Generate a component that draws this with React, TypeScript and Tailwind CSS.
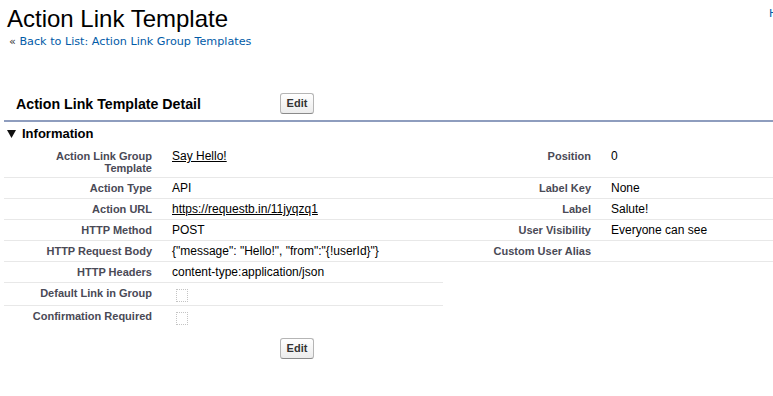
import React from "react";

type Cell = { label?: React.ReactNode; value?: React.ReactNode; border?: boolean; check?: boolean };

const Label = ({ children, border }: { children?: React.ReactNode; border: boolean }) => (
  <div
    className={`text-right pr-[10px] pt-[4px] pb-[3px] text-[11px] leading-[12px] font-bold text-[#4a4a56] ${
      border ? "border-b border-[#e8e8e8]" : ""
    }`}
  >
    {children}
  </div>
);

const Value = ({ children, border, check }: { children?: React.ReactNode; border: boolean; check?: boolean }) => (
  <div
    className={`pl-[10px] ${check ? "pt-[6px]" : "pt-[3px]"} pb-[3px] text-[12px] leading-[14px] text-black ${
      border ? "border-b border-[#e8e8e8]" : ""
    }`}
  >
    {check ? <div className="ml-[4px] w-[12px] h-[13px] border border-dotted border-[#c4c4c4]" /> : children}
  </div>
);

const EditButton = () => (
  <button className="w-[34px] h-[21px] rounded-[3px] border border-[#b5b5b5] border-b-[#8a8a8a] bg-linear-to-b from-white to-[#ececec] text-[11px] font-bold text-[#333] leading-none">
    Edit
  </button>
);

export default function App() {
  const rows: [Cell, Cell][] = [
    [
      { label: <>Action Link Group<br />Template</>, value: <span className="underline">Say Hello!</span>, border: true },
      { label: "Position", value: "0", border: true },
    ],
    [
      { label: "Action Type", value: "API", border: true },
      { label: "Label Key", value: "None", border: true },
    ],
    [
      { label: "Action URL", value: <span className="underline">https://requestb.in/11jyqzq1</span>, border: true },
      { label: "Label", value: "Salute!", border: true },
    ],
    [
      { label: "HTTP Method", value: "POST", border: true },
      { label: "User Visibility", value: "Everyone can see", border: true },
    ],
    [
      { label: "HTTP Request Body", value: '{"message": "Hello!", "from":"{!userId}"}', border: true },
      { label: "Custom User Alias", value: "", border: true },
    ],
    [
      { label: "HTTP Headers", value: "content-type:application/json", border: true },
      { border: false },
    ],
    [
      { label: "Default Link in Group", check: true, border: true },
      { border: false },
    ],
    [
      { label: "Confirmation Required", check: true, border: false },
      { border: false },
    ],
  ];

  return (
    <div className="w-[773px] h-[396px] overflow-hidden bg-white font-['Liberation_Sans',Arial,sans-serif]">
      <div className="w-[900px]">
        <div className="flex items-start pt-[5px] pl-[7px]">
          <h1 className="w-[762px] text-[24px] leading-[28px] font-normal text-black">Action Link Template</h1>
          <a className="mt-[2px] text-[11px] leading-[14px] text-[#015ba7] font-['DejaVu_Sans',Verdana,sans-serif] whitespace-nowrap">
            Help for this Page
          </a>
        </div>
        <div className="mt-[2px] pl-[9px] text-[11.2px] leading-[14px] font-['DejaVu_Sans',Verdana,sans-serif]">
          <span className="text-[#333]">«</span>{" "}
          <a className="text-[#015ba7]">Back to List: Action Link Group Templates</a>
        </div>

        <div className="mt-[44px] flex items-center h-[21px] pl-[16px]">
          <h2 className="w-[264px] text-[14.2px] font-bold text-black leading-[18px]">Action Link Template Detail</h2>
          <EditButton />
        </div>

        <div className="mt-[6px] ml-[4px] h-[2px] bg-[#8e9dbe]" />

        <div className="mt-[3px] h-[18px] flex items-center pl-[7px] gap-[6px]">
          <svg width="9" height="8" viewBox="0 0 9 8">
            <polygon points="0,0 9,0 4.5,8" fill="#111" />
          </svg>
          <span className="text-[13px] font-bold text-black">Information</span>
        </div>

        <div className="mt-[3px] ml-[4px] w-[878px] grid grid-cols-[158px_281px_158px_281px]">
          {rows.map(([l, r], i) => (
            <React.Fragment key={i}>
              <Label border={!!l.border}>{l.label}</Label>
              <Value border={!!l.border} check={l.check}>
                {l.value}
              </Value>
              <Label border={!!r.border}>{r.label}</Label>
              <Value border={!!r.border}>{r.value}</Value>
            </React.Fragment>
          ))}
        </div>

        <div className="mt-[7px] ml-[280px]">
          <EditButton />
        </div>
      </div>
    </div>
  );
}
